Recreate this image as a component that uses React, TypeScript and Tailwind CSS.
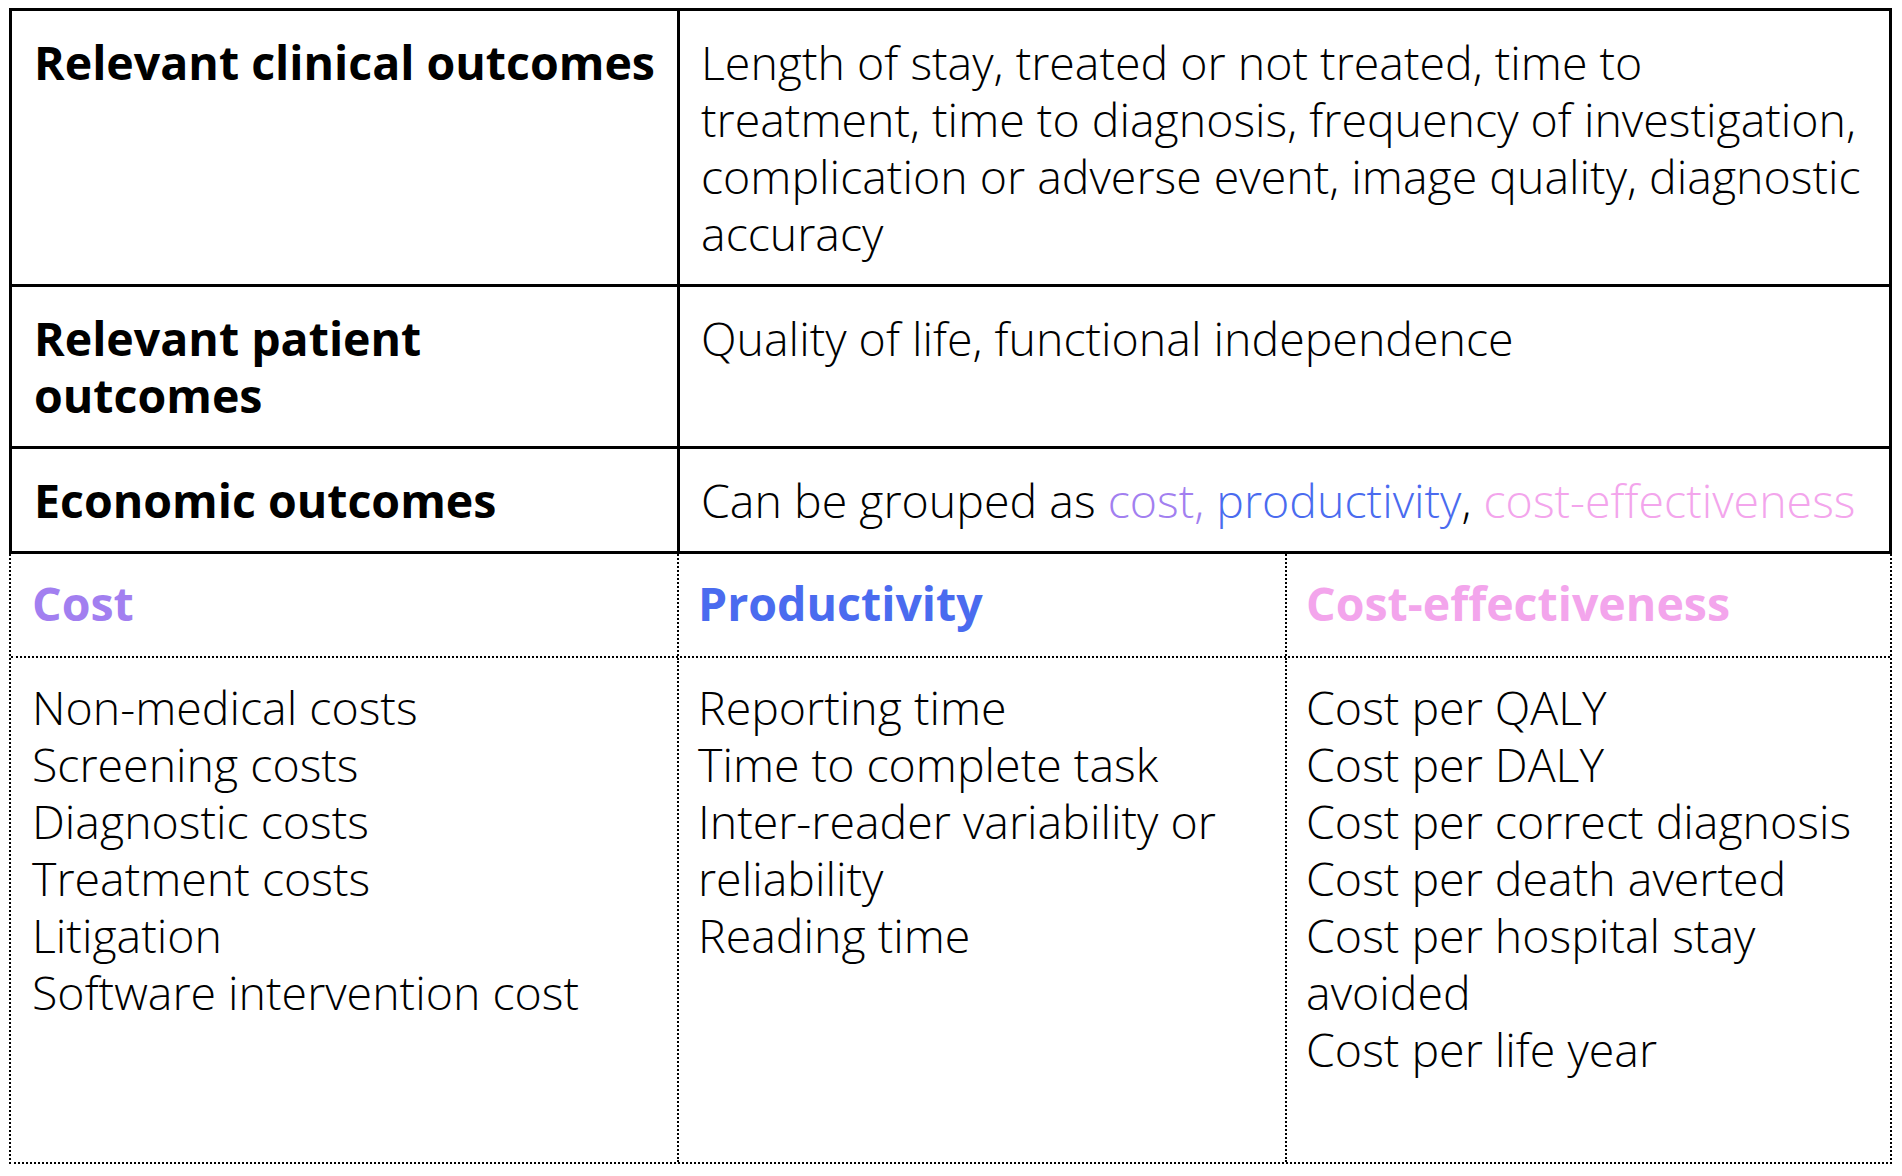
const headCell = "border-r-[3px] border-black pl-[22px] pr-[16px] pt-[23px] pb-[22px] font-bold";
const bodyCell = "pl-[21px] pr-[16px] pt-[23px] pb-[22px] font-light";

const clinicalLines = [
  "Length of stay, treated or not treated, time to",
  "treatment, time to diagnosis, frequency of investigation,",
  "complication or adverse event, image quality, diagnostic",
  "accuracy",
];

const costItems = [
  "Non-medical costs",
  "Screening costs",
  "Diagnostic costs",
  "Treatment costs",
  "Litigation",
  "Software intervention cost",
];

const productivityItems = [
  "Reporting time",
  "Time to complete task",
  "Inter-reader variability or reliability",
  "Reading time",
];

const costEffectItems = [
  "Cost per QALY",
  "Cost per DALY",
  "Cost per correct diagnosis",
  "Cost per death averted",
  "Cost per hospital stay avoided",
  "Cost per life year",
];

function ItemList({ items }: { items: string[] }) {
  return (
    <div className="font-light">
      {items.map((item) => (
        <p key={item}>{item}</p>
      ))}
    </div>
  );
}

export default function App() {
  return (
    <div className="min-h-screen bg-white pl-[9px] pt-[8px] font-['Open_Sans',sans-serif] text-[46.5px] leading-[57px] text-black">
      <div className="w-[1883px]">
        {/* outcome definitions */}
        <div className="border-[3px] border-black">
          <div className="grid grid-cols-[668px_1fr] border-b-[3px] border-black">
            <div className={headCell}>Relevant clinical outcomes</div>
            <div className={bodyCell + " whitespace-nowrap"}>
              {clinicalLines.map((line) => (
                <p key={line}>{line}</p>
              ))}
            </div>
          </div>
          <div className="grid grid-cols-[668px_1fr] border-b-[3px] border-black">
            <div className={headCell}>
              Relevant patient
              <br />
              outcomes
            </div>
            <div className={bodyCell}>Quality of life, functional independence</div>
          </div>
          <div className="grid grid-cols-[668px_1fr]">
            <div className={headCell}>Economic outcomes</div>
            <div className={bodyCell + " whitespace-nowrap"}>
              Can be grouped as <span className="text-[#a27ff0]">cost,</span>{" "}
              <span className="text-[#4a6bef]">productivity</span>,{" "}
              <span className="text-[#f3a5ec]">cost-effectiveness</span>
            </div>
          </div>
        </div>

        {/* economic breakdown */}
        <div className="border-x-2 border-b-2 border-dotted border-black">
          <div className="grid grid-cols-[668px_608px_1fr] border-b-2 border-dotted border-black font-bold">
            <div className="border-r-2 border-dotted border-black pl-[21px] pt-[21px] pb-[24px] text-[#a27ff0]">
              Cost
            </div>
            <div className="border-r-2 border-dotted border-black pl-[19px] pt-[21px] pb-[24px] text-[#4a6bef]">
              Productivity
            </div>
            <div className="pl-[19px] pt-[21px] pb-[24px] text-[#f3a5ec]">Cost-effectiveness</div>
          </div>
          <div className="grid h-[504px] grid-cols-[668px_608px_1fr]">
            <div className="border-r-2 border-dotted border-black pl-[21px] pr-[12px] pt-[21px]">
              <ItemList items={costItems} />
            </div>
            <div className="border-r-2 border-dotted border-black pl-[19px] pr-[12px] pt-[21px]">
              <ItemList items={productivityItems} />
            </div>
            <div className="pl-[19px] pr-[12px] pt-[21px]">
              <ItemList items={costEffectItems} />
            </div>
          </div>
        </div>
      </div>
    </div>
  );
}
